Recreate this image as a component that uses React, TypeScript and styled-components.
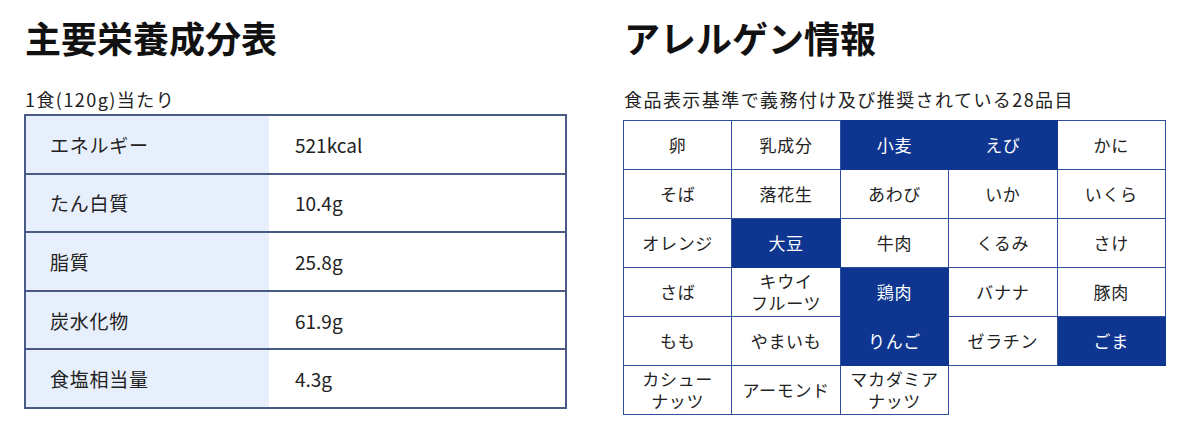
import React from 'react';
import styled, { createGlobalStyle } from 'styled-components';

const GlobalStyle = createGlobalStyle`
  body {
    margin: 0;
    background: #ffffff;
    color: #222222;
    font-family: "Noto Sans CJK JP", "Noto Sans", sans-serif;
  }
`;

const Page = styled.div`
  display: grid;
  grid-template-columns: 543px 543px;
  column-gap: 56px;
  padding: 16px 24px 0;
`;

const Section = styled.section`
  display: flex;
  flex-direction: column;
`;

const Heading = styled.h2`
  margin: 0;
  font-size: 36px;
  font-weight: 700;
  line-height: 43px;
  color: #111111;
  padding-left: 1px;
`;

const Caption = styled.p`
  margin: 27px 0 0;
  font-size: 18px;
  line-height: 26px;
  letter-spacing: 0.08em;
  padding-left: 1px;
`;

const NutritionTable = styled.table`
  margin-top: 2px;
  width: 543px;
  border-collapse: collapse;
  table-layout: fixed;
  border: 2px solid #4a5a86;
`;

const NutritionRow = styled.tr`
  height: 58.6px;
  border-bottom: 2px solid #4a5a86;
`;

const LabelCell = styled.th`
  box-sizing: border-box;
  width: 244px;
  background: #e8effc;
  text-align: left;
  font-weight: 400;
  font-size: 19px;
  letter-spacing: 0.04em;
  padding: 0 0 0 24px;
`;

const ValueCell = styled.td`
  font-size: 19px;
  padding: 0 0 0 26px;
`;

const AllergenTable = styled.table`
  margin-top: 8px;
  width: 543px;
  border-collapse: collapse;
  table-layout: fixed;
`;

const AllergenRow = styled.tr`
  height: 49px;
`;

const AllergenCell = styled.td<{ $active?: boolean }>`
  border: 1px solid ${p => (p.$active ? '#0e3691' : '#2f4f9e')};
  background: ${p => (p.$active ? '#0e3691' : '#ffffff')};
  color: ${p => (p.$active ? '#ffffff' : '#222222')};
  text-align: center;
  font-size: 17px;
  line-height: 22px;
  letter-spacing: 0.04em;
  padding: 0;
  white-space: pre-line;
`;

const nutrition = [
  ['エネルギー', '521kcal'],
  ['たん白質', '10.4g'],
  ['脂質', '25.8g'],
  ['炭水化物', '61.9g'],
  ['食塩相当量', '4.3g'],
];

type Allergen = { name: string; active?: boolean };

const allergens: Allergen[][] = [
  [{ name: '卵' }, { name: '乳成分' }, { name: '小麦', active: true }, { name: 'えび', active: true }, { name: 'かに' }],
  [{ name: 'そば' }, { name: '落花生' }, { name: 'あわび' }, { name: 'いか' }, { name: 'いくら' }],
  [{ name: 'オレンジ' }, { name: '大豆', active: true }, { name: '牛肉' }, { name: 'くるみ' }, { name: 'さけ' }],
  [{ name: 'さば' }, { name: 'キウイ\nフルーツ' }, { name: '鶏肉', active: true }, { name: 'バナナ' }, { name: '豚肉' }],
  [{ name: 'もも' }, { name: 'やまいも' }, { name: 'りんご', active: true }, { name: 'ゼラチン' }, { name: 'ごま', active: true }],
  [{ name: 'カシュー\nナッツ' }, { name: 'アーモンド' }, { name: 'マカダミア\nナッツ' }],
];

const App = () => {
  return (
    <>
      <GlobalStyle />
      <Page>
        <Section>
          <Heading>主要栄養成分表</Heading>
          <Caption>1食(120g)当たり</Caption>
          <NutritionTable>
            <tbody>
              {nutrition.map(([label, value]) => (
                <NutritionRow key={label}>
                  <LabelCell>{label}</LabelCell>
                  <ValueCell>{value}</ValueCell>
                </NutritionRow>
              ))}
            </tbody>
          </NutritionTable>
        </Section>

        <Section>
          <Heading>アレルゲン情報</Heading>
          <Caption>食品表示基準で義務付け及び推奨されている28品目</Caption>
          <AllergenTable>
            <tbody>
              {allergens.map((row, i) => (
                <AllergenRow key={i}>
                  {row.map(item => (
                    <AllergenCell key={item.name} $active={item.active}>
                      {item.name}
                    </AllergenCell>
                  ))}
                </AllergenRow>
              ))}
            </tbody>
          </AllergenTable>
        </Section>
      </Page>
    </>
  );
};

export default App;
